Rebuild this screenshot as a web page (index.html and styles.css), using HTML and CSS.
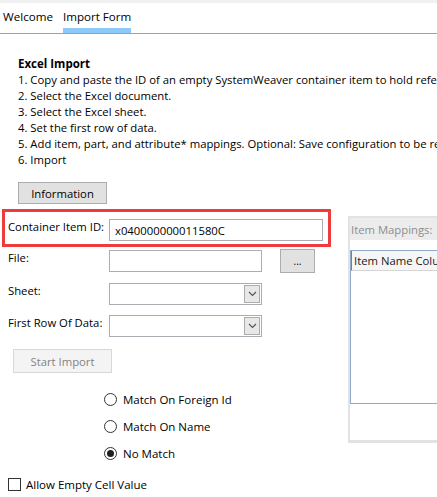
FILE: index.html
```
<!DOCTYPE html>
<html>
<head>
<meta charset="utf-8">
<link rel="stylesheet" href="styles.css">
</head>
<body>
<div class="window">
  <div class="topstrip"></div>
  <div class="tabbar">
    <div class="tab">Welcome</div>
    <div class="tab active">Import Form</div>
  </div>
  <div class="intro">
    <div class="title">Excel Import</div>
    <div class="line">1. Copy and paste the ID of an empty SystemWeaver container item to hold references to the imported items.</div>
    <div class="line">2. Select the Excel document.</div>
    <div class="line">3. Select the Excel sheet.</div>
    <div class="line">4. Set the first row of data.</div>
    <div class="line">5. Add item, part, and attribute* mappings. Optional: Save configuration to be reused later.</div>
    <div class="line">6. Import</div>
    <button class="btn info">Information</button>
  </div>
  <div class="main">
    <div class="leftcol">
      <div class="highlight">
        <div class="label">Container Item ID:</div>
        <div class="input wide">x040000000011580C</div>
      </div>
      <div class="row first">
        <div class="label">File:</div>
        <div class="input"></div>
        <button class="btn browse">...</button>
      </div>
      <div class="row">
        <div class="label">Sheet:</div>
        <div class="input combo"><span class="drop"><svg width="9" height="6" viewBox="0 0 9 6"><path d="M1 1 L4.5 4.5 L8 1" fill="none" stroke="#555" stroke-width="1.2"/></svg></span></div>
      </div>
      <div class="row">
        <div class="label">First Row Of Data:</div>
        <div class="input combo"><span class="drop"><svg width="9" height="6" viewBox="0 0 9 6"><path d="M1 1 L4.5 4.5 L8 1" fill="none" stroke="#555" stroke-width="1.2"/></svg></span></div>
      </div>
      <button class="btn start" disabled>Start Import</button>
      <div class="radios">
        <div class="radio"><span class="circle"></span>Match On Foreign Id</div>
        <div class="radio"><span class="circle"></span>Match On Name</div>
        <div class="radio"><span class="circle checked"></span>No Match</div>
      </div>
      <div class="check"><span class="box"></span>Allow Empty Cell Value</div>
    </div>
    <div class="panel">
      <div class="panelhead">Item Mappings:</div>
      <div class="list">
        <div class="colhead">Item Name Column</div>
      </div>
    </div>
  </div>
</div>
</body>
</html>
```

FILE: styles.css
```
html, body {
  margin: 0;
  padding: 0;
  background: #fff;
}
body {
  width: 437px;
  height: 497px;
  overflow: hidden;
  font-family: "Open Sans", "Noto Sans", sans-serif;
  font-size: 11.3px;
  color: #000;
}
.window {
  width: 437px;
}
.topstrip {
  height: 3px;
  background: #f0f0f0;
}
.tabbar {
  display: flex;
  height: 31px;
  border-bottom: 1px solid #a0a0a0;
  padding-left: 3px;
  gap: 10px;
  box-sizing: border-box;
}
.tab {
  height: 30px;
  line-height: 18px;
  padding-top: 5px;
  box-sizing: border-box;
  font-size: 11.6px;
  color: #000;
}
.tab.active {
  border-bottom: 5px solid #8dcaf7;
}
.intro {
  padding-left: 18px;
  padding-top: 22px;
}
.title {
  font-weight: bold;
  line-height: 16px;
  font-size: 11.5px;
}
.line {
  line-height: 16px;
  white-space: nowrap;
  overflow: hidden;
}
.btn {
  font-family: inherit;
  font-size: 11.3px;
  color: #000;
  background: #e1e1e1;
  border: 1px solid #adadad;
  padding: 0;
  margin: 0;
  box-sizing: border-box;
}
.info {
  display: block;
  margin-top: 14px;
  width: 89px;
  height: 22px;
}
.main {
  display: flex;
  align-items: flex-start;
}
.leftcol {
  width: 348px;
  flex-shrink: 0;
}
.highlight {
  margin-left: 2px;
  margin-top: 5px;
  width: 329px;
  height: 38px;
  box-sizing: border-box;
  border: 3px solid #ee3b3b;
  display: flex;
  align-items: flex-start;
  padding: 7px 0 0 3px;
}
.label {
  width: 101px;
  flex-shrink: 0;
  line-height: 14px;
  padding-top: 1px;
}
.input {
  width: 153px;
  height: 22px;
  box-sizing: border-box;
  border: 1px solid #abadb3;
  background: #fff;
  line-height: 20px;
  padding-left: 5px;
  position: relative;
}
.input.wide {
  width: 214px;
  padding-top: 1px;
}
.row {
  display: flex;
  align-items: flex-start;
  padding-left: 8px;
  margin-top: 10px;
}
.row.first {
  margin-top: 3px;
}
.browse {
  margin-left: 18px;
  margin-top: -1px;
  width: 35px;
  height: 24px;
  font-size: 10px;
  line-height: 14px;
}
.combo .drop {
  position: absolute;
  right: 1px;
  top: 1px;
  width: 16px;
  height: 18px;
  box-sizing: border-box;
  border: 1px solid #acacac;
  background: #e8e8e8;
  display: flex;
  align-items: center;
  justify-content: center;
}
.start {
  display: block;
  margin-left: 13px;
  margin-top: 12px;
  width: 99px;
  height: 24px;
  background: #f4f4f4;
  border-color: #d8d8d8;
  color: #838383;
}
.radios {
  margin-top: 13px;
  padding-left: 104px;
}
.radio {
  height: 27px;
  display: flex;
  align-items: center;
  font-size: 11.5px;
}
.circle {
  width: 13px;
  height: 13px;
  box-sizing: border-box;
  border: 1px solid #333;
  border-radius: 50%;
  margin-right: 6px;
  display: flex;
  align-items: center;
  justify-content: center;
  background: #fff;
}
.circle.checked::after {
  content: "";
  width: 7px;
  height: 7px;
  border-radius: 50%;
  background: #1f1f1f;
}
.check {
  margin-top: 9px;
  padding-left: 8px;
  height: 16px;
  display: flex;
  align-items: center;
  font-size: 11.5px;
}
.box {
  width: 13px;
  height: 13px;
  box-sizing: border-box;
  border: 1px solid #333;
  margin-right: 5px;
  background: #fff;
}
.panel {
  flex-shrink: 0;
  width: 300px;
  margin-top: 12px;
  height: 227px;
  box-sizing: border-box;
  border: 2px solid #e2e2e2;
  border-bottom-width: 3px;
  border-right: none;
}
.panelhead {
  height: 22px;
  background: #ececec;
  color: #8c8c8c;
  line-height: 24px;
  padding-left: 1px;
}
.list {
  margin-top: 10px;
  height: 154px;
  border: 1px solid #8ea9c9;
  border-right: none;
  box-sizing: border-box;
}
.colhead {
  height: 19px;
  line-height: 19px;
  padding-left: 2px;
  background: #f6f6f6;
  border-bottom: 1px solid #d5d5d5;
  border-left: 1px solid #7f7f7f;
  color: #1a1a1a;
  white-space: nowrap;
}
```
